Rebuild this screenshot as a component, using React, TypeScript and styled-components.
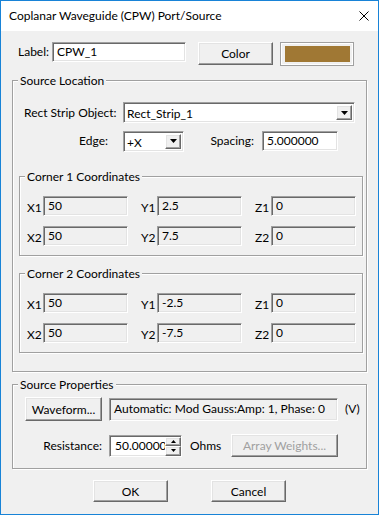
import React from "react";
import styled, { createGlobalStyle, css } from "styled-components";

const Global = createGlobalStyle`
  html, body { margin: 0; padding: 0; background: #f0f0f0; }
  body {
    font-family: Lato, "Noto Sans", "Liberation Sans", sans-serif;
    font-size: 12px;
    color: #000;
  }
  * { box-sizing: border-box; }
`;

const raised = css`
  border: 1px solid;
  border-color: #ffffff #696969 #696969 #ffffff;
  box-shadow: inset -1px -1px #a0a0a0, inset 1px 1px #e3e3e3;
  background: #f0f0f0;
`;

const sunken = css`
  border: 1px solid;
  border-color: #a0a0a0 #ffffff #ffffff #a0a0a0;
  box-shadow: inset 1px 1px #696969, inset -1px -1px #e3e3e3;
`;

const Window = styled.div`
  width: 379px;
  height: 515px;
  border: 1px solid #1883d7;
  background: #f0f0f0;
  display: flex;
  flex-direction: column;
  overflow: hidden;
`;

const TitleBar = styled.div`
  flex: none;
  height: 30px;
  background: #ffffff;
  display: flex;
  align-items: center;
  justify-content: space-between;
  padding: 0 9px 0 8px;
`;

const Title = styled.span`
  font-size: 12px;
  line-height: 16px;
`;

const Body = styled.div`
  flex: 1;
  display: flex;
  flex-direction: column;
  padding: 11px 11px 0 11px;
`;

const LabelRow = styled.div`
  display: flex;
  align-items: flex-start;
  height: 24px;
  padding-left: 6px;
`;

const Text = styled.span<{ $w?: number; $right?: boolean; $pad?: number; $disabled?: boolean }>`
  flex: none;
  white-space: nowrap;
  line-height: 20px;
  ${(p) => (p.$w ? `width: ${p.$w}px;` : "")}
  ${(p) => (p.$right ? "text-align: right;" : "")}
  ${(p) => (p.$pad ? `padding-left: ${p.$pad}px;` : "")}
  ${(p) => (p.$disabled ? "color: #a0a0a0;" : "")}
`;

const Edit = styled.div<{ $w: number; $h?: number; $ro?: boolean }>`
  ${sunken};
  flex: none;
  width: ${(p) => p.$w}px;
  height: ${(p) => p.$h ?? 20}px;
  background: ${(p) => (p.$ro ? "#f0f0f0" : "#ffffff")};
  display: flex;
  align-items: center;
  padding: 0 4px;
  white-space: nowrap;
  line-height: 16px;
`;

const Button = styled.div<{ $w: number; $h?: number; $disabled?: boolean }>`
  ${raised};
  flex: none;
  width: ${(p) => p.$w}px;
  height: ${(p) => p.$h ?? 23}px;
  display: flex;
  align-items: center;
  justify-content: center;
  white-space: nowrap;
  color: ${(p) => (p.$disabled ? "#a0a0a0" : "#000")};
`;

const Swatch = styled.div`
  flex: none;
  width: 74px;
  height: 24px;
  border: 1px solid #a0a0a0;
  box-shadow: inset 1px 1px #ffffff, inset -1px -1px #ffffff;
  padding: 3px 3px 3px 4px;
  margin-left: 7px;
`;

const SwatchFill = styled.div`
  width: 100%;
  height: 100%;
  background: #a07834;
`;

const Group = styled.div<{ $mt: number }>`
  position: relative;
  flex: none;
  margin-top: ${(p) => p.$mt}px;
  border: 1px solid #a0a0a0;
  box-shadow: inset 1px 1px #ffffff, 1px 1px #ffffff;
`;

const GroupTitle = styled.span`
  position: absolute;
  top: -8px;
  left: 5px;
  padding: 0 2px;
  background: #f0f0f0;
  line-height: 15px;
  white-space: nowrap;
`;

const SourceLocation = styled(Group)`
  height: 292px;
  display: flex;
  flex-direction: column;
  padding-top: 21px;
`;

const Row = styled.div<{ $mt?: number; $h: number }>`
  display: flex;
  align-items: center;
  height: ${(p) => p.$h}px;
  margin-top: ${(p) => p.$mt ?? 0}px;
`;

const Combo = styled.div<{ $w: number }>`
  ${sunken};
  flex: none;
  width: ${(p) => p.$w}px;
  height: 21px;
  background: #ffffff;
  display: flex;
  align-items: stretch;
  padding: 2px;
`;

const ComboText = styled.span`
  flex: 1;
  padding-left: 1px;
  line-height: 17px;
  white-space: nowrap;
`;

const ComboButton = styled.span`
  ${raised};
  flex: none;
  width: 16px;
  display: flex;
  align-items: center;
  justify-content: center;
`;

const Corner = styled(Group)`
  width: 344px;
  margin-left: 6px;
  padding: 19px 5px 9px 7px;
  display: grid;
  grid-template-columns: repeat(3, 101px);
  column-gap: 13px;
  row-gap: 10px;
`;

const Cell = styled.div`
  display: flex;
  align-items: center;
  height: 20px;
`;

const CoordLabel = styled.span`
  flex: none;
  width: 16px;
  padding-top: 4px;
  line-height: 16px;
`;

const SourceProps = styled(Group)`
  padding: 12px 0 11px 0;
  display: flex;
  flex-direction: column;
`;

const Spin = styled.div`
  ${sunken};
  position: relative;
  flex: none;
  width: 73px;
  height: 22px;
  background: #ffffff;
  display: flex;
  align-items: center;
  padding: 0 0 0 5px;
  white-space: nowrap;
  line-height: 16px;
`;

const SpinButtons = styled.div`
  position: absolute;
  top: 1px;
  right: 0px;
  bottom: 0px;
  width: 16px;
  display: flex;
  flex-direction: column;
`;

const SpinHalf = styled.span`
  ${raised};
  flex: 1;
  display: flex;
  align-items: center;
  justify-content: center;
`;

const Footer = styled.div`
  display: flex;
  justify-content: center;
  gap: 43px;
  margin-top: 11px;
`;

const Close = () => (
  <svg width="10" height="10" viewBox="0 0 10 10">
    <path d="M0.5 0.5 L9.5 9.5 M9.5 0.5 L0.5 9.5" stroke="#000" strokeWidth="1" fill="none" />
  </svg>
);

const Down = ({ w = 7, h = 4 }: { w?: number; h?: number }) => (
  <svg width={w} height={h} viewBox={`0 0 ${w} ${h}`}>
    <polygon points={`0,0 ${w},0 ${w / 2},${h}`} fill="#000" />
  </svg>
);

const Up = ({ w = 5, h = 3 }: { w?: number; h?: number }) => (
  <svg width={w} height={h} viewBox={`0 0 ${w} ${h}`}>
    <polygon points={`0,${h} ${w},${h} ${w / 2},0`} fill="#000" />
  </svg>
);

type Coord = { l: string; v: string };

const CornerBox = ({ title, mt, items }: { title: string; mt: number; items: Coord[] }) => (
  <Corner $mt={mt}>
    <GroupTitle>{title}</GroupTitle>
    {items.map((c) => (
      <Cell key={c.l}>
        <CoordLabel>{c.l}</CoordLabel>
        <Edit $w={85} $ro>
          {c.v}
        </Edit>
      </Cell>
    ))}
  </Corner>
);

export default function App() {
  return (
    <>
      <Global />
      <Window>
        <TitleBar>
          <Title>Coplanar Waveguide (CPW) Port/Source</Title>
          <Close />
        </TitleBar>
        <Body>
          <LabelRow>
            <Text style={{ marginRight: 3 }}>Label:</Text>
            <Edit $w={134}>CPW_1</Edit>
            <Button $w={75} style={{ marginLeft: 12 }}>
              Color
            </Button>
            <Swatch>
              <SwatchFill />
            </Swatch>
          </LabelRow>

          <SourceLocation $mt={14}>
            <GroupTitle>Source Location</GroupTitle>
            <Row $h={21}>
              <Text $w={110} $pad={11}>
                Rect Strip Object:
              </Text>
              <Combo $w={232}>
                <ComboText>Rect_Strip_1</ComboText>
                <ComboButton>
                  <Down />
                </ComboButton>
              </Combo>
            </Row>
            <Row $h={20} $mt={8}>
              <Text $w={95} $right>
                Edge:
              </Text>
              <Combo $w={61} style={{ marginLeft: 15 }}>
                <ComboText>+X</ComboText>
                <ComboButton>
                  <Down />
                </ComboButton>
              </Combo>
              <Text $w={70} $right>
                Spacing:
              </Text>
              <Edit $w={76} style={{ marginLeft: 8 }}>
                5.000000
              </Edit>
            </Row>
            <CornerBox
              title="Corner 1 Coordinates"
              mt={25}
              items={[
                { l: "X1", v: "50" },
                { l: "Y1", v: "2.5" },
                { l: "Z1", v: "0" },
                { l: "X2", v: "50" },
                { l: "Y2", v: "7.5" },
                { l: "Z2", v: "0" },
              ]}
            />
            <CornerBox
              title="Corner 2 Coordinates"
              mt={17}
              items={[
                { l: "X1", v: "50" },
                { l: "Y1", v: "-2.5" },
                { l: "Z1", v: "0" },
                { l: "X2", v: "50" },
                { l: "Y2", v: "-7.5" },
                { l: "Z2", v: "0" },
              ]}
            />
          </SourceLocation>

          <SourceProps $mt={12}>
            <GroupTitle>Source Properties</GroupTitle>
            <Row $h={24} style={{ paddingLeft: 12 }}>
              <Button $w={77} $h={24}>
                Waveform...
              </Button>
              <Edit $w={229} $h={23} $ro style={{ marginLeft: 7 }}>
                Automatic: Mod Gauss:Amp: 1, Phase: 0
              </Edit>
              <Text style={{ marginLeft: 7 }}>(V)</Text>
            </Row>
            <Row $h={23} $mt={13}>
              <Text $w={89} $right style={{ marginRight: 7 }}>
                Resistance:
              </Text>
              <Spin>
                50.000000
                <SpinButtons>
                  <SpinHalf>
                    <Up />
                  </SpinHalf>
                  <SpinHalf>
                    <Down w={5} h={3} />
                  </SpinHalf>
                </SpinButtons>
              </Spin>
              <Text $w={49} style={{ paddingLeft: 8 }}>
                Ohms
              </Text>
              <Button $w={107} $disabled>
                Array Weights...
              </Button>
            </Row>
          </SourceProps>

          <Footer>
            <Button $w={75} $h={22}>
              OK
            </Button>
            <Button $w={75} $h={22}>
              Cancel
            </Button>
          </Footer>
        </Body>
      </Window>
    </>
  );
}
